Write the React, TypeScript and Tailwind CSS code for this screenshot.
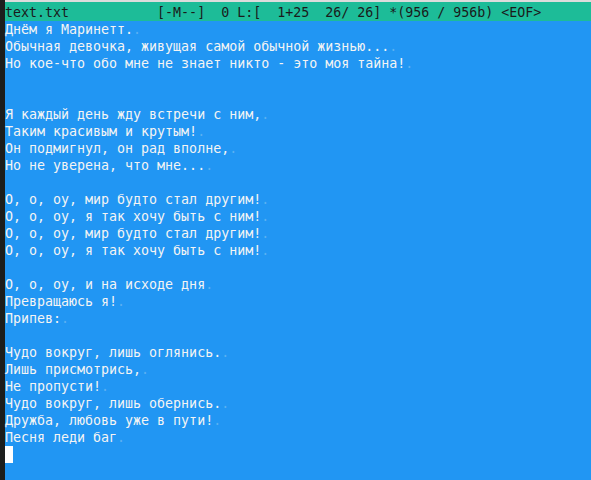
const lines = [
  "Днём я Маринетт.",
  "Обычная девочка, живущая самой обычной жизнью...",
  "Но кое-что обо мне не знает никто - это моя тайна!",
  "",
  "",
  "Я каждый день жду встречи с ним,",
  "Таким красивым и крутым!",
  "Он подмигнул, он рад вполне,",
  "Но не уверена, что мне...",
  "",
  "О, о, оу, мир будто стал другим!",
  "О, о, оу, я так хочу быть с ним!",
  "О, о, оу, мир будто стал другим!",
  "О, о, оу, я так хочу быть с ним!",
  "",
  "О, о, оу, и на исходе дня",
  "Превращаюсь я!",
  "Припев:",
  "",
  "Чудо вокруг, лишь оглянись.",
  "Лишь присмотрись,",
  "Не пропусти!",
  "Чудо вокруг, лишь обернись.",
  "Дружба, любовь уже в пути!",
  "Песня леди баг",
];

const status = "text.txt           [-M--]  0 L:[  1+25  26/ 26] *(956 / 956b) <EOF>";

export default function App() {
  return (
    <div
      className="flex h-[480px] w-[591px] overflow-hidden text-[13.3px] leading-[17px]"
      style={{ fontFamily: "'DejaVu Sans Mono', monospace" }}
    >
      <div className="w-[5px] shrink-0 bg-[#1c1e1d]" />
      <div className="flex flex-1 flex-col">
        <div className="h-[2px] bg-[#dcdcdc]" />
        <div className="h-[19px] bg-[#1dbc98] pt-[2px] text-[#1a1a1a]">
          <pre className="font-[inherit]">{status}</pre>
        </div>
        <div className="flex-1 bg-[#2196f3] text-[#f4f4f4]">
          {lines.map((line, i) => (
            <div key={i} className="h-[17px] whitespace-pre">
              {line}
              {line && <span className="text-[#5ab0f2]">.</span>}
            </div>
          ))}
          <div className="h-[17px]">
            <span className="inline-block h-[17px] w-[8px] bg-white" />
          </div>
        </div>
      </div>
    </div>
  );
}
